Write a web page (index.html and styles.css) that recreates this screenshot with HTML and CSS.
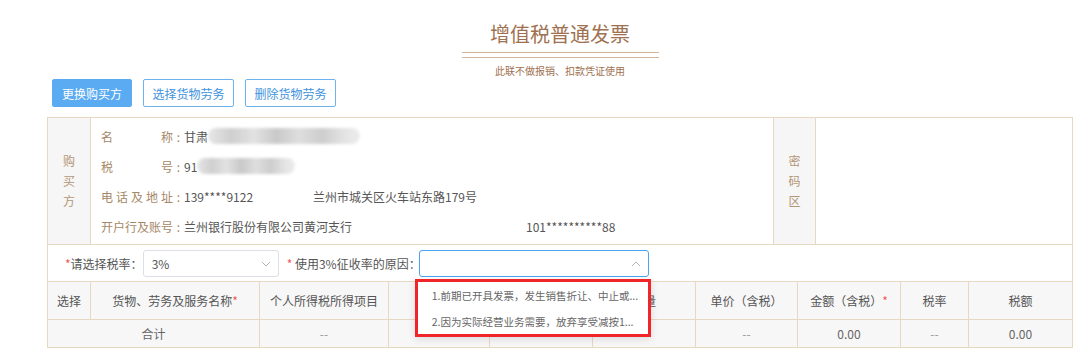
FILE: index.html
```html
<!DOCTYPE html>
<html lang="zh-CN">
<head>
<meta charset="utf-8">
<link rel="stylesheet" href="styles.css">
</head>
<body>
<div class="page">
  <div class="head">
    <div class="title">增值税普通发票</div>
    <div class="dline"></div>
    <div class="sub">此联不做报销、扣款凭证使用</div>
  </div>
  <div class="toolbar">
    <button class="btn primary">更换购买方</button>
    <button class="btn plain">选择货物劳务</button>
    <button class="btn plain">删除货物劳务</button>
  </div>
  <div class="invoice">
    <div class="buyer">
      <div class="side"><span>购</span><span>买</span><span>方</span></div>
      <div class="info">
        <div class="row"><span class="lbl">名称</span><span class="colon">:</span><span class="val">甘肃</span><span class="blur w150"></span></div>
        <div class="row"><span class="lbl">税号</span><span class="colon">:</span><span class="val">91</span><span class="blur w100"></span></div>
        <div class="row"><span class="lbl">电话及地址</span><span class="colon">:</span><span class="val phone">139****9122</span><span class="val">兰州市城关区火车站东路179号</span></div>
        <div class="row"><span class="lbl">开户行及账号</span><span class="colon">:</span><span class="val bank">兰州银行股份有限公司黄河支行</span><span class="val">101**********88</span></div>
      </div>
      <div class="side pwd"><span>密</span><span>码</span><span>区</span></div>
      <div class="pwd-area"></div>
    </div>
    <div class="rate">
      <span class="rlabel"><i class="req">*</i>请选择税率：</span>
      <div class="select s1"><span>3%</span>
        <svg class="chev" width="10" height="6" viewBox="0 0 10 6"><path d="M1 1 L5 5 L9 1" fill="none" stroke="#b4b4b4" stroke-width="1"/></svg>
      </div>
      <span class="rlabel r2"><i class="req">*</i> 使用3%征收率的原因：</span>
      <div class="select s2 focus">
        <svg class="chev" width="10" height="6" viewBox="0 0 10 6"><path d="M1 5 L5 1 L9 5" fill="none" stroke="#b4b4b4" stroke-width="1"/></svg>
        <div class="dropdown">
          <div class="opt">1.前期已开具发票，发生销售折让、中止或...</div>
          <div class="opt">2.因为实际经营业务需要，放弃享受减按1...</div>
        </div>
      </div>
    </div>
    <table class="goods">
      <colgroup>
        <col class="c1"><col class="c2"><col class="c3"><col class="c4"><col class="c5"><col class="c6"><col class="c7"><col class="c8"><col class="c9"><col class="c10">
      </colgroup>
      <tr class="hd">
        <th>选择</th>
        <th>货物、劳务及服务名称<i class="req">*</i></th>
        <th>个人所得税所得项目</th>
        <th>规格型号</th>
        <th>单位</th>
        <th>数量</th>
        <th>单价（含税）</th>
        <th>金额（含税）<i class="req">*</i></th>
        <th>税率</th>
        <th>税额</th>
      </tr>
      <tr class="tot">
        <td colspan="2">合计</td>
        <td class="dim">--</td>
        <td></td>
        <td></td>
        <td></td>
        <td class="dim">--</td>
        <td>0.00</td>
        <td class="dim">--</td>
        <td>0.00</td>
      </tr>
    </table>
  </div>
</div>
</body>
</html>
```
FILE: styles.css
```css
* { box-sizing: border-box; }
body {
  margin: 0;
  background: #fff;
  font-family: "Noto Sans CJK SC", "Noto Sans", sans-serif;
  color: #555;
}
.page { width: 1080px; height: 348px; overflow: hidden; }
.head {
  display: flex;
  flex-direction: column;
  align-items: center;
  padding-top: 20px;
  padding-left: 40px;
}
.title {
  font-size: 20px;
  line-height: 28px;
  color: #a07150;
}
.dline {
  width: 197px;
  height: 6px;
  margin-top: 4px;
  border-top: 1.5px solid #d2b59c;
  border-bottom: 1.5px solid #d2b59c;
}
.sub {
  font-size: 10px;
  line-height: 14px;
  margin-top: 6px;
  color: #a07150;
}
.toolbar {
  display: flex;
  gap: 11px;
  padding-left: 52px;
  margin-top: 1px;
}
.btn {
  height: 28px;
  font-family: inherit;
  font-size: 12px;
  border-radius: 2px;
  padding: 0;
  cursor: pointer;
}
.btn.primary {
  width: 80px;
  background: #5aabf2;
  border: 1px solid #5aabf2;
  color: #fff;
}
.btn.plain {
  width: 91px;
  background: #fff;
  border: 1px solid #6fb3ee;
  color: #3f93dd;
}
.invoice {
  margin-left: 47px;
  margin-top: 10px;
  width: 1026px;
  border: 1px solid #e8d7c1;
  border-bottom: none;
}
.buyer {
  display: flex;
  height: 127px;
  border-bottom: 1px solid #e8d7c1;
}
.side {
  width: 43px;
  flex: none;
  background: #f6f6f6;
  border-right: 1px solid #e8d7c1;
  display: flex;
  flex-direction: column;
  justify-content: center;
  align-items: center;
  font-size: 12px;
  line-height: 20px;
  color: #b39574;
}
.side.pwd { border-left: 1px solid #e8d7c1; }
.info {
  flex: none;
  width: 682px;
  padding: 3px 0 0 10px;
  font-size: 12px;
}
.row {
  height: 30px;
  display: flex;
  align-items: center;
}
.lbl {
  width: 72px;
  text-align: justify;
  text-align-last: justify;
  color: #a58867;
}
.colon {
  width: 11px;
  text-align: center;
  color: #a58867;
}
.val { color: #555; }
.phone { width: 129px; }
.bank { width: 342px; }
.blur {
  display: inline-block;
  height: 16px;
  border-radius: 8px;
  background: linear-gradient(90deg, #e6e6e6, #cfcfcf 15%, #e2e2e2 30%, #c9c9c9 45%, #dedede 60%, #cdcdcd 75%, #e4e4e4 90%, #ececec);
  filter: blur(1.5px);
}
.w150 { width: 152px; }
.w100 { width: 98px; }
.pwd-area { flex: 1; }
.rate {
  height: 37px;
  display: flex;
  align-items: center;
  padding-left: 17px;
  font-size: 12px;
  border-bottom: 1px solid #e8d7c1;
}
.req {
  font-style: normal;
  color: #f25a5a;
}
.rlabel { color: #555; }
.select {
  position: relative;
  height: 27px;
  border: 1px solid #dcdfe6;
  border-radius: 3px;
  display: flex;
  align-items: center;
  padding-left: 8px;
  background: #fff;
}
.s1 { width: 136px; margin-left: 0; }
.r2 { margin-left: 8px; }
.s2 { width: 230px; margin-left: -2px; }
.select.focus { border-color: #4aa3f3; }
.chev { position: absolute; right: 7px; top: 10px; }
.dropdown {
  position: absolute;
  left: -5px;
  top: 28px;
  width: 236px;
  height: 58px;
  background: #fff;
  border: 3px solid #f0252a;
  box-shadow: 0 2px 8px rgba(0,0,0,0.12);
  padding: 1px 0 0 14px;
  z-index: 5;
}
.opt {
  font-size: 10.5px;
  line-height: 26px;
  color: #666;
  white-space: nowrap;
}
.goods {
  width: 1025px;
  border-collapse: collapse;
  table-layout: fixed;
  font-size: 12px;
  margin-left: -1px;
}
.goods th, .goods td {
  border: 1px solid #e8d7c1;
  text-align: center;
  font-weight: normal;
  color: #555;
  background: #f7f7f7;
  padding: 0;
}
.goods tr:first-child th { border-top: none; }
.hd th { height: 37px; }
.tot td { height: 28px; color: #666; }
.tot td.dim { color: #999; }
.c1 { width: 43px; }
.c2 { width: 169px; }
.c3 { width: 129px; }
.c4 { width: 101px; }
.c5 { width: 103px; }
.c6 { width: 103px; }
.c7 { width: 102px; }
.c8 { width: 103px; }
.c9 { width: 68px; }
.c10 { width: 104px; }
```
